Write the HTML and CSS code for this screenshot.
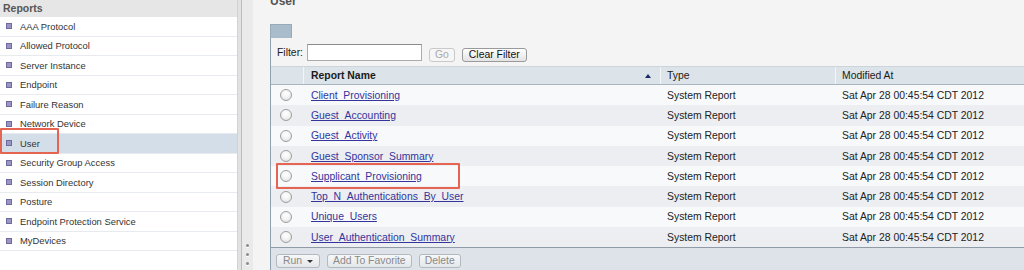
FILE: index.html
```html
<!DOCTYPE html>
<html>
<head>
<meta charset="utf-8">
<link rel="stylesheet" href="styles.css">
</head>
<body>
<div class="app">
  <aside class="nav">
    <div class="nav-head">Reports</div>
    <ul class="nav-list">
      <li class="nav-item"><span class="bullet"></span>AAA Protocol</li>
      <li class="nav-item"><span class="bullet"></span>Allowed Protocol</li>
      <li class="nav-item"><span class="bullet"></span>Server Instance</li>
      <li class="nav-item"><span class="bullet"></span>Endpoint</li>
      <li class="nav-item"><span class="bullet"></span>Failure Reason</li>
      <li class="nav-item"><span class="bullet"></span>Network Device</li>
      <li class="nav-item is-selected"><span class="bullet"></span>User<span class="mark mark-user"></span></li>
      <li class="nav-item"><span class="bullet"></span>Security Group Access</li>
      <li class="nav-item"><span class="bullet"></span>Session Directory</li>
      <li class="nav-item"><span class="bullet"></span>Posture</li>
      <li class="nav-item"><span class="bullet"></span>Endpoint Protection Service</li>
      <li class="nav-item"><span class="bullet"></span>MyDevices</li>
    </ul>
  </aside>
  <div class="splitter">
    <span class="dot"></span><span class="dot"></span><span class="dot"></span>
  </div>
  <main class="content">
    <h1 class="title">User</h1>
    <div class="tab"></div>
    <div class="panel">
      <div class="filter">
        <span class="filter-label">Filter:</span>
        <input class="filter-input" type="text">
        <button class="btn btn-disabled btn-go">Go</button>
        <button class="btn btn-clear">Clear Filter</button>
      </div>
      <div class="thead">
        <div class="th th-radio"></div>
        <div class="th th-name"><span>Report Name</span><span class="sort"></span></div>
        <div class="th th-plain">Type</div>
        <div class="th th-plain">Modified At</div>
      </div>
      <div class="tbody">
        <div class="row"><span class="radio"></span><a class="link">Client_Provisioning</a><span class="cell">System Report</span><span class="cell">Sat Apr 28 00:45:54 CDT 2012</span></div>
        <div class="row"><span class="radio"></span><a class="link">Guest_Accounting</a><span class="cell">System Report</span><span class="cell">Sat Apr 28 00:45:54 CDT 2012</span></div>
        <div class="row"><span class="radio"></span><a class="link">Guest_Activity</a><span class="cell">System Report</span><span class="cell">Sat Apr 28 00:45:54 CDT 2012</span></div>
        <div class="row"><span class="radio"></span><a class="link">Guest_Sponsor_Summary</a><span class="cell">System Report</span><span class="cell">Sat Apr 28 00:45:54 CDT 2012</span></div>
        <div class="row"><span class="radio"></span><a class="link">Supplicant_Provisioning</a><span class="cell">System Report</span><span class="cell">Sat Apr 28 00:45:54 CDT 2012</span><span class="mark mark-row"></span></div>
        <div class="row"><span class="radio"></span><a class="link">Top_N_Authentications_By_User</a><span class="cell">System Report</span><span class="cell">Sat Apr 28 00:45:54 CDT 2012</span></div>
        <div class="row"><span class="radio"></span><a class="link">Unique_Users</a><span class="cell">System Report</span><span class="cell">Sat Apr 28 00:45:54 CDT 2012</span></div>
        <div class="row"><span class="radio"></span><a class="link">User_Authentication_Summary</a><span class="cell">System Report</span><span class="cell">Sat Apr 28 00:45:54 CDT 2012</span></div>
      </div>
      <div class="footer">
        <button class="btn btn-foot btn-run">Run <span class="caret"></span></button>
        <button class="btn btn-foot">Add To Favorite</button>
        <button class="btn btn-foot">Delete</button>
      </div>
    </div>
  </main>
</div>
</body>
</html>
```
FILE: styles.css
```css
* { box-sizing: border-box; }
html, body { margin: 0; padding: 0; }
body {
  width: 1024px;
  height: 270px;
  overflow: hidden;
  font-family: "Liberation Sans", Arial, sans-serif;
  background: #f4f4f4;
}
.app { display: flex; height: 270px; }

/* left navigation */
.nav {
  width: 238px;
  flex: none;
  background: #fff;
  border-right: 1px solid #d2d2d2;
}
.nav-head {
  height: 17px;
  background: #e6e6e6;
  color: #555;
  font-weight: bold;
  font-size: 10.5px;
  line-height: 17px;
  padding-left: 3px;
}
.nav-list { list-style: none; margin: 0; padding: 0; }
.nav-item {
  position: relative;
  height: 19.5px;
  border-bottom: 1px solid #e7eaee;
  display: flex;
  align-items: center;
  padding-left: 6px;
  font-size: 9.4px;
  color: #333;
}
.nav-item.is-selected { background: #d4dee8; }
.bullet {
  flex: none;
  width: 6px;
  height: 6px;
  margin-right: 8px;
  background: #9b95c4;
  border: 1px solid #6f6a9c;
}

.mark {
  position: absolute;
  z-index: 2;
  border: 2px solid #e66452;
  border-radius: 1px;
  pointer-events: none;
}
.mark-user { left: 0; top: -6px; width: 59px; height: 26px; }

/* splitter */
.splitter {
  width: 15px;
  flex: none;
  background: linear-gradient(to right, #e2e2e2 0 3px, #bdbdbd 3px 4px, #eaeaea 4px);
  display: flex;
  flex-direction: column;
  justify-content: flex-end;
  align-items: center;
  gap: 6px;
  padding: 0 0 5px 4px;
}
.dot {
  width: 3px;
  height: 3px;
  border-radius: 50%;
  background: #8a8a8a;
  box-shadow: 0 1px 0 #fff;
}

/* content */
.content { flex: 1; min-width: 0; padding-left: 17px; }
.title {
  margin: -6px 0 16px;
  height: 14px;
  font-size: 12px;
  line-height: 14px;
  font-weight: bold;
  color: #555;
}
.tab {
  width: 22px;
  height: 14px;
  background: #a9bccb;
  border: 1px solid #97aabb;
  border-bottom: none;
}
.panel { border-left: 1px solid #8fa1b1; }

.filter {
  height: 28px;
  display: flex;
  align-items: center;
  padding-left: 6px;
  font-size: 10.4px;
  color: #222;
}
.filter-label { margin-right: 4px; }
.filter-input {
  width: 115px;
  height: 17px;
  margin: 0 7px 0 0;
  border: 1px solid #ababab;
  border-top-color: #8a8a8a;
  background: #fff;
  padding: 0;
}
.btn {
  display: inline-flex;
  align-items: center;
  justify-content: center;
  height: 14px;
  padding: 0 6px;
  font-family: inherit;
  font-size: 10.4px;
  line-height: 12px;
  border-radius: 3px;
  border: 1px solid #9a9a9a;
  background: linear-gradient(#ffffff, #e3e3e3);
  color: #111;
}
.filter .btn { margin-top: 5px; }
.btn-go { padding: 0 5px; margin-right: 7px; }
.btn-disabled {
  color: #a9a9a9;
  border-color: #c9c9c9;
  background: #f6f6f6;
}

/* table */
.thead, .row {
  display: grid;
  grid-template-columns: 32px 357px 175px 1fr;
}
.thead {
  height: 19px;
  background: #dce3e9;
  border-top: 1px solid #cdd5dc;
  border-bottom: 1px solid #a9b5c0;
  font-size: 10.4px;
  color: #1a1a1a;
}
.th { display: flex; align-items: center; }
.th + .th { border-left: 1px solid #f3f6f8; }
.th-name {
  justify-content: space-between;
  padding: 0 9px 0 7px;
  font-weight: bold;
}
.th-plain { padding-left: 6px; }
.sort {
  width: 0;
  height: 0;
  border-left: 3px solid transparent;
  border-right: 3px solid transparent;
  border-bottom: 4px solid #1b2a66;
}

.tbody { border-bottom: 1px solid #8f9ba7; }
.row {
  position: relative;
  height: 20.3px;
  align-items: center;
  font-size: 10.4px;
  color: #222;
}
.row:nth-child(odd) { background: #f7f9fb; }
.row:nth-child(even) { background: #eceef1; }
.radio {
  width: 12px;
  height: 12px;
  margin-left: 9px;
  border-radius: 50%;
  border: 1px solid #9e9e9e;
  background: radial-gradient(circle at 50% 35%, #ffffff 0, #f4f4f4 45%, #d9d9d9 100%);
}
.link {
  padding-left: 8px;
  color: #34349c;
  text-decoration: underline;
}
.cell { padding-left: 7px; }
.mark-row { left: 5px; top: -3px; width: 184px; height: 26px; }

/* footer */
.footer {
  height: 22px;
  background: #dde3e8;
  display: flex;
  gap: 7px;
  padding: 6px 0 0 5px;
}
.btn-foot {
  padding: 0 5px;
  color: #8a8a8a;
  border-color: #b3b9bf;
  background: linear-gradient(#f6f7f8, #e4e7ea);
}
.btn-run { gap: 5px; padding: 0 6px; }
.caret {
  width: 0;
  height: 0;
  border-left: 3px solid transparent;
  border-right: 3px solid transparent;
  border-top: 3px solid #333;
}
```
